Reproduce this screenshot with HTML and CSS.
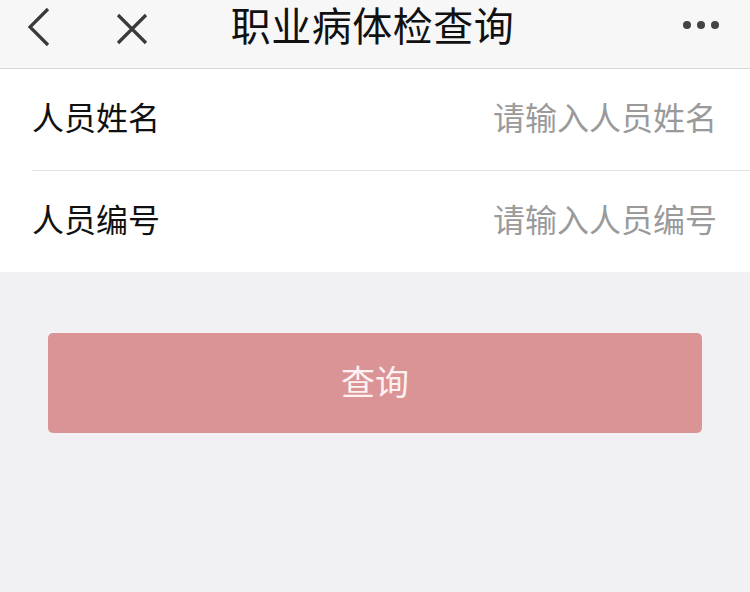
FILE: index.html
```html
<!DOCTYPE html>
<html lang="zh-CN">
<head>
  <meta charset="UTF-8" />
  <meta name="viewport" content="width=device-width, initial-scale=1.0"/>
  <title>职业病体检查询</title>
  <link rel="stylesheet" href="styles.css">
</head>
<body>
  <header class="nav-bar">
    <div class="nav-left">
      <svg class="icon-back" width="30" height="44" viewBox="0 0 30 44">
        <polyline points="22,4 4,22 22,40" fill="none" stroke="#3a3a3a" stroke-width="3.2"/>
      </svg>
      <svg class="icon-close" width="34" height="34" viewBox="0 0 34 34">
        <path d="M3 3 L31 31 M31 3 L3 31" fill="none" stroke="#3a3a3a" stroke-width="3.2"/>
      </svg>
    </div>
    <h1 class="nav-title">职业病体检查询</h1>
    <div class="nav-more">
      <span></span><span></span><span></span>
    </div>
  </header>

  <form class="query-form" id="queryForm">
    <div class="form-row">
      <label for="name">人员姓名</label>
      <input type="text" id="name" placeholder="请输入人员姓名">
    </div>
    <div class="form-row">
      <label for="code">人员编号</label>
      <input type="text" id="code" placeholder="请输入人员编号">
    </div>
  </form>

  <div class="actions">
    <button type="submit" form="queryForm" class="btn-query">查询</button>
  </div>
</body>
</html>
```

FILE: styles.css
```css
* {
  box-sizing: border-box;
}

body {
  margin: 0;
  font-family: "Noto Sans CJK SC", "Noto Sans", sans-serif;
  background-color: #f1f0f2;
  color: #111;
  height: 592px;
  overflow: hidden;
}

.nav-bar {
  height: 69px;
  background: #f7f7f7;
  border-bottom: 1px solid #d8d8d8;
  display: flex;
  align-items: flex-start;
  justify-content: space-between;
  padding: 0 31px 0 26px;
}

.nav-left {
  display: flex;
  align-items: center;
  gap: 59px;
  width: 200px;
  height: 52px;
}

.icon-back {
  margin-top: 2px;
}

.icon-close {
  margin-top: 6px;
}

.nav-title {
  margin: 0;
  font-size: 40px;
  font-weight: 400;
  line-height: 48px;
  color: #111;
  letter-spacing: 0.5px;
}

.nav-more {
  width: 200px;
  height: 50px;
  display: flex;
  justify-content: flex-end;
  align-items: center;
  gap: 6px;
}

.nav-more span {
  width: 8px;
  height: 8px;
  border-radius: 50%;
  background: #444;
}

.query-form {
  background: #fff;
  padding-left: 32px;
}

.form-row {
  height: 102px;
  display: flex;
  align-items: center;
  justify-content: space-between;
  padding-right: 33px;
  padding-bottom: 8px;
  border-bottom: 1px solid #e3e3e3;
}

.form-row:last-child {
  border-bottom: none;
  height: 101px;
}

.form-row label {
  font-size: 32px;
  color: #111;
}

.form-row input {
  border: none;
  outline: none;
  background: transparent;
  font-family: inherit;
  font-size: 32px;
  text-align: right;
  width: 300px;
  padding: 0;
  color: #111;
}

.form-row input::placeholder {
  color: #9a9a9a;
}

.actions {
  padding: 61px 48px 0;
}

.btn-query {
  display: block;
  width: 100%;
  height: 100px;
  border: none;
  border-radius: 5px;
  background-color: #db9496;
  color: #fdf1f1;
  font-family: inherit;
  font-size: 34px;
  padding: 0 0 6px;
  cursor: pointer;
}
```
